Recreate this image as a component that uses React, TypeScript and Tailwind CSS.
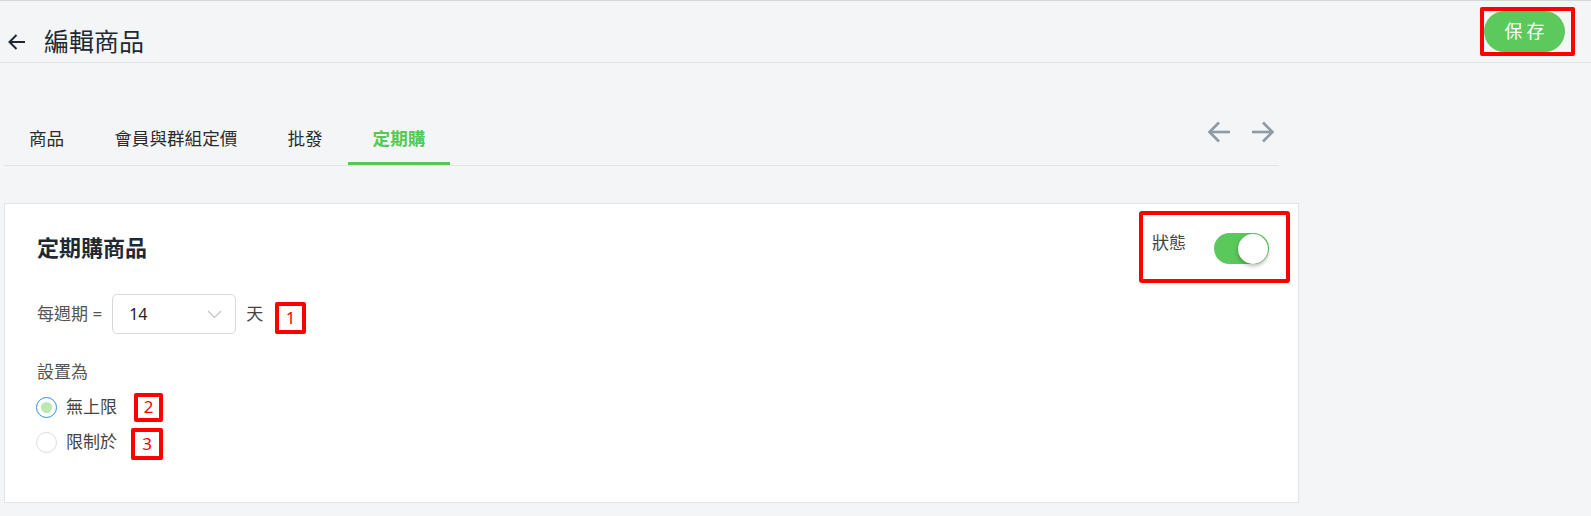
import React from 'react';

const font = { fontFamily: '"Noto Sans", "Noto Sans CJK TC", sans-serif' };

const tabs = ['商品', '會員與群組定價', '批發', '定期購'];

const RedBox = ({ children, className = '' }: { children: React.ReactNode; className?: string }) => (
  <div className={`flex items-center justify-center border-4 border-[#ff0000] rounded-[2px] text-[#ff0000] text-[17px] bg-white ${className}`}>
    {children}
  </div>
);

const App = () => {
  return (
    <div className="min-h-[516px] bg-[#f4f5f7] border-t border-[#d6d6d6] text-[#333]" style={font}>
      {/* Header */}
      <header className="h-[62px] flex justify-between border-b border-[#e1e3e6]">
        <div className="flex items-start pt-[25px]">
          <svg className="ml-2 mt-[7px]" width="18" height="18" viewBox="0 0 18 18" fill="none" stroke="#1f2933" strokeWidth="2">
            <path d="M17 9H1.5" />
            <path d="M8.5 2L1.5 9l7 7" />
          </svg>
          <h1 className="ml-[18px] text-[25px] leading-[30px] text-[#1f2933]">編輯商品</h1>
        </div>
        <div className="mt-[6px] mr-4 self-start border-4 border-[#ff0000] rounded-[2px] pr-[6px]">
          <button className="w-[81px] h-[41px] rounded-full bg-[#5bc95b] text-white text-[18px] tracking-[4px] pl-1">保存</button>
        </div>
      </header>

      <div className="ml-1 w-[1295px]">
        {/* Tabs */}
        <div className="mt-[51px] mr-5 flex justify-between border-b border-[#e1e3e6]">
          <nav className="flex">
            {tabs.map((t, i) => (
              <div
                key={t}
                className={`h-[51px] px-[25px] flex items-center border-b-[3px] text-[17.6px] ${
                  i === 3 ? 'border-[#56c856] text-[#56c856] font-bold' : 'border-transparent text-[#2b2b2b]'
                }`}
              >
                {t}
              </div>
            ))}
          </nav>
          <div className="flex gap-[20px] mr-[4px] mt-[6px]">
            <svg width="24" height="24" viewBox="0 0 24 24" fill="none" stroke="#8e9aa4" strokeWidth="2.6">
              <path d="M23 12H2.5" />
              <path d="M12 2.5L2.5 12l9.5 9.5" />
            </svg>
            <svg width="24" height="24" viewBox="0 0 24 24" fill="none" stroke="#8e9aa4" strokeWidth="2.6">
              <path d="M1 12h20.5" />
              <path d="M12 2.5l9.5 9.5-9.5 9.5" />
            </svg>
          </div>
        </div>

        {/* Card */}
        <div className="mt-[37px] bg-white border border-[#e2e4e7] pt-[7px] pl-8 pr-2 pb-[44px]">
          <div className="flex items-center justify-between">
            <h2 className="text-[22px] font-bold text-[#1f2933]">定期購商品</h2>
            <div className="h-[72px] flex items-start gap-[28px] border-4 border-[#ff0000] rounded-[3px] pl-[9px] pr-[17px] pt-[16px]">
              <span className="text-[17px] leading-[24px] text-[#444]">狀態</span>
              <div className="mt-[2px] w-[55px] h-[31px] rounded-full bg-[#5ac85a] flex items-center justify-end pr-[1px]">
                <div className="w-[30px] h-[30px] rounded-full bg-white shadow-[0_2px_4px_rgba(0,0,0,0.3)]" />
              </div>
            </div>
          </div>

          <div className="mt-[11px] flex items-center text-[#555]">
            <span className="text-[17px]">每週期 =</span>
            <div className="ml-[10px] w-[124px] h-[40px] border border-[#d9d9d9] rounded-[5px] flex items-center justify-between pl-4 pr-[13px]">
              <span className="text-[16px] text-[#222]">14</span>
              <svg width="15" height="9" viewBox="0 0 15 9" fill="none" stroke="#c4c4c4" strokeWidth="1.2">
                <path d="M1 1l6.5 6.5L14 1" />
              </svg>
            </div>
            <span className="ml-[10px] text-[17px] text-[#444]">天</span>
            <RedBox className="ml-[12px] mt-2 w-[31px] h-[32px]">1</RedBox>
          </div>

          <div className="mt-[26px] text-[17px] text-[#555] leading-[24px]">設置為</div>

          <div className="mt-[8px] -ml-[1px] flex items-center h-[30px]">
            <div className="w-[21px] h-[21px] rounded-full border border-[#2f8ae5] flex items-center justify-center">
              <div className="w-[11px] h-[11px] rounded-full bg-[#b9e8b3]" />
            </div>
            <span className="ml-[9px] text-[17px] text-[#444]">無上限</span>
            <RedBox className="ml-[17px] w-[29px] h-[29px]">2</RedBox>
          </div>
          <div className="mt-[4px] -ml-[1px] flex items-center h-[32px]">
            <div className="w-[21px] h-[21px] rounded-full border border-[#dcdcdc]" />
            <span className="ml-[9px] text-[17px] text-[#444]">限制於</span>
            <RedBox className="ml-[14px] mt-[4px] w-[32px] h-[32px]">3</RedBox>
          </div>
        </div>
      </div>
    </div>
  );
};

export default App;
